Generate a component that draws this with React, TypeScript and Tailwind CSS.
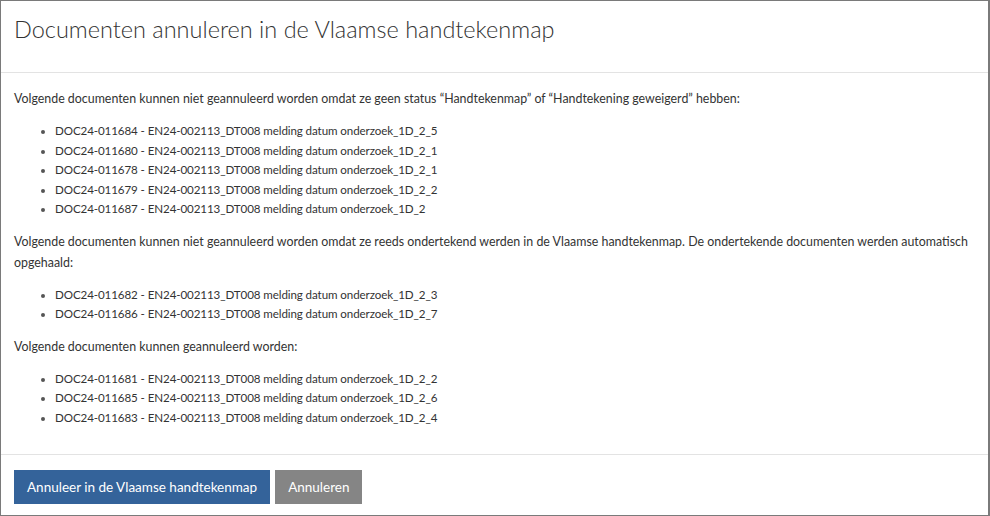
const notAllowed = [
  "DOC24-011684 - EN24-002113_DT008 melding datum onderzoek_1D_2_5",
  "DOC24-011680 - EN24-002113_DT008 melding datum onderzoek_1D_2_1",
  "DOC24-011678 - EN24-002113_DT008 melding datum onderzoek_1D_2_1",
  "DOC24-011679 - EN24-002113_DT008 melding datum onderzoek_1D_2_2",
  "DOC24-011687 - EN24-002113_DT008 melding datum onderzoek_1D_2",
];

const signed = [
  "DOC24-011682 - EN24-002113_DT008 melding datum onderzoek_1D_2_3",
  "DOC24-011686 - EN24-002113_DT008 melding datum onderzoek_1D_2_7",
];

const cancellable = [
  "DOC24-011681 - EN24-002113_DT008 melding datum onderzoek_1D_2_2",
  "DOC24-011685 - EN24-002113_DT008 melding datum onderzoek_1D_2_6",
  "DOC24-011683 - EN24-002113_DT008 melding datum onderzoek_1D_2_4",
];

// Simple bulleted list of documents
const DocList = ({ items }: { items: string[] }) => (
  <ul className="list-disc pl-[41px] my-[12px] marker:text-[#555] text-[11.6px] tracking-[-0.1px]">
    {items.map((item, i) => (
      <li key={i} className="leading-[19.5px]">
        {item}
      </li>
    ))}
  </ul>
);

export default function App() {
  return (
    <div
      className="w-[990px] h-[516px] bg-white border border-[#7a7a7a] border-r-2 flex flex-col text-[#333]"
      style={{ fontFamily: "Lato, 'Noto Sans', sans-serif" }}
    >
      {/* Header */}
      <div className="h-[72px] border-b border-[#e3e3e3] px-[13px] pt-[13px]">
        <h1 className="text-[23.5px] leading-[30px] font-light text-[#333]">
          Documenten annuleren in de Vlaamse handtekenmap
        </h1>
      </div>

      {/* Body */}
      <div className="flex-1 pl-[13px] pr-[6px] pt-[15px] text-[12.4px] leading-[21px]">
        <p>
          Volgende documenten kunnen niet geannuleerd worden omdat ze geen status “Handtekenmap” of “Handtekening geweigerd” hebben:
        </p>
        <DocList items={notAllowed} />
        <p>
          Volgende documenten kunnen niet geannuleerd worden omdat ze reeds ondertekend werden in de Vlaamse handtekenmap. De ondertekende documenten werden automatisch opgehaald:
        </p>
        <DocList items={signed} />
        <p>Volgende documenten kunnen geannuleerd worden:</p>
        <DocList items={cancellable} />
      </div>

      {/* Footer */}
      <div className="border-t border-[#e3e3e3] px-[13px] pt-[15px] h-[61px] flex gap-[5px] items-start">
        <button className="h-[34px] px-[13px] bg-[#34639a] text-white text-[13.5px]">
          Annuleer in de Vlaamse handtekenmap
        </button>
        <button className="h-[34px] px-[13px] bg-[#858585] text-white text-[13.5px]">
          Annuleren
        </button>
      </div>
    </div>
  );
}
